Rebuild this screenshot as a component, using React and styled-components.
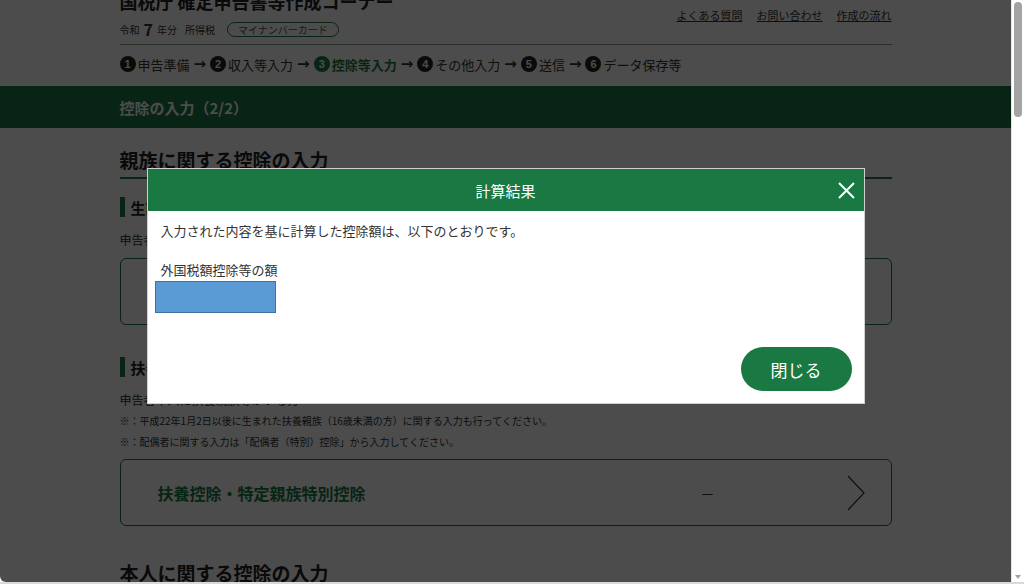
import React from "react";
import styled, { createGlobalStyle } from "styled-components";

const GlobalStyle = createGlobalStyle`
  html, body {
    margin: 0;
    padding: 0;
    overflow: hidden;
  }
  body {
    font-family: "Noto Sans CJK JP", "Noto Sans", "Liberation Sans", sans-serif;
    color: #333;
  }
`;

const GREEN = "#1a7843";

const Window = styled.div`
  display: flex;
  width: 1024px;
  height: 584px;
  border-bottom: 2px solid #d9d9d9;
  box-sizing: border-box;
  background: #fff;
`;

const Viewport = styled.div`
  position: relative;
  flex: 1;
  overflow: hidden;
  border-bottom-left-radius: 6px;
`;

const Page = styled.div`
  margin-top: -12px;
  background: #fff;
`;

const Container = styled.div`
  width: 772px;
  margin: 0 auto;
`;

const Header = styled.header`
  display: flex;
  justify-content: space-between;
  padding-bottom: 6px;
  border-bottom: 1px solid #7f9f8a;
`;

const TitleBlock = styled.div`
  display: flex;
  flex-direction: column;
  gap: 6px;
`;

const SiteTitle = styled.h1`
  margin: 0;
  font-size: 18px;
  line-height: 26px;
  font-weight: 700;
  color: #222;
`;

const YearRow = styled.div`
  display: flex;
  align-items: center;
  height: 18px;
  font-size: 10px;
  color: #333;
`;

const YearNum = styled.span`
  font-size: 16px;
  font-weight: 700;
  margin: 0 4px;
`;

const Tax = styled.span`
  margin-left: 8px;
`;

const Pill = styled.span`
  margin-left: 12px;
  width: 112px;
  height: 15px;
  box-sizing: border-box;
  border: 1px solid ${GREEN};
  border-radius: 8px;
  font-size: 10px;
  line-height: 13px;
  text-align: center;
  color: #555;
`;

const Links = styled.nav`
  display: flex;
  gap: 14px;
  padding-top: 19px;
  align-self: flex-start;
`;

const Link = styled.a`
  font-size: 11px;
  line-height: 16px;
  color: #333;
  text-decoration: underline;
`;

const Steps = styled.ol`
  list-style: none;
  display: flex;
  align-items: center;
  margin: 9px 0 0;
  padding: 0;
  height: 20px;
`;

const Step = styled.li`
  display: flex;
  align-items: center;
  gap: 2px;
  font-size: 13px;
  color: ${(p) => (p.$active ? GREEN : "#333")};
  font-weight: ${(p) => (p.$active ? 700 : 400)};
`;

const StepNum = styled.span`
  display: inline-flex;
  align-items: center;
  justify-content: center;
  width: 16px;
  height: 16px;
  border-radius: 50%;
  background: ${(p) => (p.$active ? GREEN : "#222")};
  color: #fff;
  font-size: 11px;
  font-weight: 700;
  font-family: "Liberation Sans", sans-serif;
`;

const Arrow = styled.span`
  font-size: 15px;
  font-weight: 700;
  color: #333;
  margin: 0 4px;
  font-family: "DejaVu Sans", sans-serif;
`;

const Band = styled.div`
  margin-top: 12px;
  height: 42px;
  background: ${GREEN};
  display: flex;
  align-items: center;
`;

const BandTitle = styled.h2`
  margin: 0;
  font-size: 15px;
  font-weight: 700;
  color: #fff;
`;

const SectionTitle = styled.h2`
  margin: ${(p) => p.$top}px 0 0;
  font-size: 19px;
  line-height: 28px;
  font-weight: 700;
  color: #222;
  padding-bottom: 3px;
  border-bottom: 2px solid ${GREEN};
`;

const SubHeading = styled.h3`
  display: flex;
  align-items: center;
  gap: 6px;
  margin: ${(p) => p.$top}px 0 0;
  height: 20px;
  font-size: 15px;
  font-weight: 700;
  color: #222;
  &::before {
    content: "";
    width: 5px;
    height: 20px;
    background: ${GREEN};
  }
`;

const Lead = styled.p`
  margin: 14px 0 0;
  font-size: 12px;
  line-height: 18px;
  color: #333;
`;

const Note = styled.p`
  margin: ${(p) => p.$top}px 0 0;
  font-size: 10px;
  line-height: 16px;
  color: #333;
`;

const EntryBox = styled.div`
  display: flex;
  align-items: center;
  margin-top: 9px;
  height: 67px;
  box-sizing: border-box;
  border: 1.5px solid ${GREEN};
  border-radius: 6px;
  padding: 0 25px 0 37px;
`;

const EntryTitle = styled.span`
  flex: 1;
  font-size: 16px;
  font-weight: 700;
  color: ${GREEN};
`;

const EntryValue = styled.span`
  width: 145px;
  font-size: 14px;
  color: #333;
`;

const Overlay = styled.div`
  position: absolute;
  inset: 0;
  background: rgba(0, 0, 0, 0.7);
  display: flex;
  justify-content: center;
  align-items: flex-start;
  padding-top: 168px;
`;

const Modal = styled.div`
  width: 718px;
  background: #fff;
  border: 1px solid #d0d0d0;
  box-sizing: border-box;
`;

const ModalHead = styled.div`
  position: relative;
  height: 42px;
  background: ${GREEN};
  display: flex;
  align-items: center;
  justify-content: center;
`;

const ModalTitle = styled.h2`
  margin: 0;
  font-size: 15px;
  font-weight: 400;
  color: #fff;
`;

const CloseBtn = styled.button`
  position: absolute;
  right: 8px;
  top: 12px;
  width: 18px;
  height: 18px;
  padding: 0;
  border: none;
  background: none;
  display: flex;
  align-items: center;
  justify-content: center;
`;

const ModalBody = styled.div`
  padding: 10px 12px 12px 7px;
  display: flex;
  flex-direction: column;
`;

const BodyText = styled.p`
  margin: 0 0 0 6px;
  font-size: 13px;
  line-height: 20px;
  color: #333;
`;

const FieldLabel = styled(BodyText)`
  margin-top: 19px;
`;

const MaskedValue = styled.div`
  margin-top: 1px;
  width: 121px;
  height: 32px;
  box-sizing: border-box;
  background: #5b9bd5;
  border: 1px solid #41719c;
`;

const CloseButton = styled.button`
  align-self: flex-end;
  margin-top: 34px;
  width: 111px;
  height: 44px;
  border: none;
  border-radius: 22px;
  background: ${GREEN};
  color: #fff;
  font-size: 17px;
  font-family: inherit;
`;

const Scrollbar = styled.div`
  width: 13px;
  position: relative;
  background: #fff;
  border-left: 1px solid #e6e6e6;
  box-sizing: border-box;
`;

const Thumb = styled.div`
  position: absolute;
  left: 2px;
  top: 2px;
  width: 8px;
  height: 115px;
  border-radius: 4px;
  background: #a3a3a3;
`;

const DownArrow = styled.div`
  position: absolute;
  left: 3px;
  bottom: 3px;
  width: 0;
  height: 0;
  border-left: 3px solid transparent;
  border-right: 3px solid transparent;
  border-top: 4px solid #a3a3a3;
`;

const steps = [
  ["1", "申告準備"],
  ["2", "収入等入力"],
  ["3", "控除等入力", true],
  ["4", "その他入力"],
  ["5", "送信"],
  ["6", "データ保存等"],
];

function Chevron() {
  return (
    <svg width="20" height="36" viewBox="0 0 20 36">
      <polyline points="2,1 18,18 2,35" fill="none" stroke="#333" strokeWidth="1.2" />
    </svg>
  );
}

export default function App() {
  return (
    <>
      <GlobalStyle />
      <Window>
        <Viewport>
          <Page>
            <Container>
              <Header>
                <TitleBlock>
                  <SiteTitle>国税庁 確定申告書等作成コーナー</SiteTitle>
                  <YearRow>
                    令和<YearNum>7</YearNum>年分
                    <Tax>所得税</Tax>
                    <Pill>マイナンバーカード</Pill>
                  </YearRow>
                </TitleBlock>
                <Links>
                  <Link>よくある質問</Link>
                  <Link>お問い合わせ</Link>
                  <Link>作成の流れ</Link>
                </Links>
              </Header>
              <Steps>
                {steps.map(([n, label, active], i) => (
                  <React.Fragment key={n}>
                    {i > 0 && <Arrow>→</Arrow>}
                    <Step $active={active}>
                      <StepNum $active={active}>{n}</StepNum>
                      {label}
                    </Step>
                  </React.Fragment>
                ))}
              </Steps>
            </Container>
            <Band>
              <Container>
                <BandTitle>控除の入力（2/2）</BandTitle>
              </Container>
            </Band>
            <Container>
              <SectionTitle $top={18}>親族に関する控除の入力</SectionTitle>
              <SubHeading $top={18}>生計を一にする配偶者</SubHeading>
              <Lead>申告者本人に生計を一にする配偶者がいる方</Lead>
              <EntryBox>
                <EntryTitle>配偶者（特別）控除</EntryTitle>
                <EntryValue>－</EntryValue>
                <Chevron />
              </EntryBox>
              <SubHeading $top={32}>扶養親族</SubHeading>
              <Lead>申告者本人に扶養親族等がいる方</Lead>
              <Note $top={4}>
                ※：平成22年1月2日以後に生まれた扶養親族（16歳未満の方）に関する入力も行ってください。
              </Note>
              <Note $top={5}>※：配偶者に関する入力は「配偶者（特別）控除」から入力してください。</Note>
              <EntryBox>
                <EntryTitle>扶養控除・特定親族特別控除</EntryTitle>
                <EntryValue>－</EntryValue>
                <Chevron />
              </EntryBox>
              <SectionTitle $top={33}>本人に関する控除の入力</SectionTitle>
            </Container>
          </Page>
          <Overlay>
            <Modal>
              <ModalHead>
                <ModalTitle>計算結果</ModalTitle>
                <CloseBtn aria-label="閉じる">
                  <svg width="17" height="17" viewBox="0 0 17 17">
                    <path d="M1 1 L16 16 M16 1 L1 16" stroke="#fff" strokeWidth="2" />
                  </svg>
                </CloseBtn>
              </ModalHead>
              <ModalBody>
                <BodyText>入力された内容を基に計算した控除額は、以下のとおりです。</BodyText>
                <FieldLabel>外国税額控除等の額</FieldLabel>
                <MaskedValue />
                <CloseButton>閉じる</CloseButton>
              </ModalBody>
            </Modal>
          </Overlay>
        </Viewport>
        <Scrollbar>
          <Thumb />
          <DownArrow />
        </Scrollbar>
      </Window>
    </>
  );
}
